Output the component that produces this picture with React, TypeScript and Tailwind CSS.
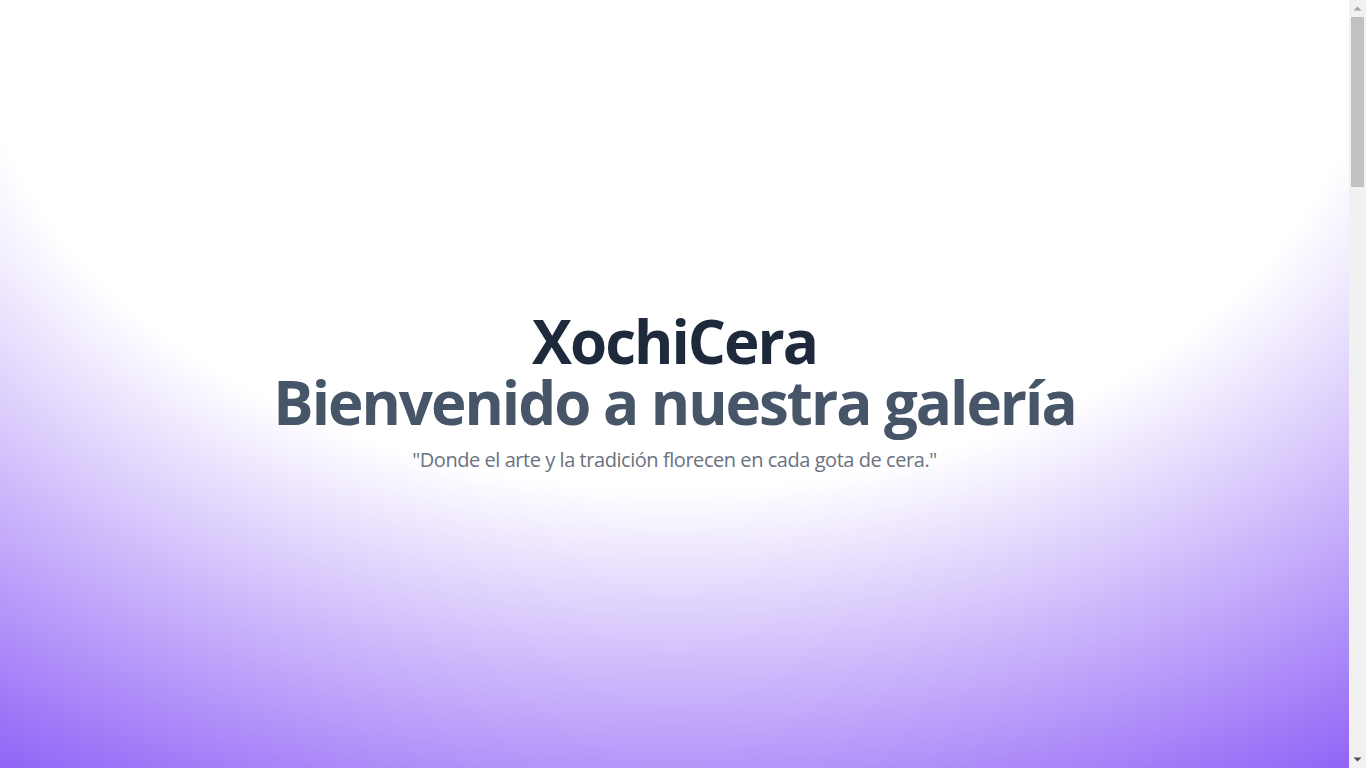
import React from "react";

function Scrollbar() {
  return (
    <div className="h-screen w-[17px] shrink-0 flex flex-col bg-[#f1f1f1]">
      <div className="h-[17px] flex items-center justify-center">
        <svg width="9" height="5" viewBox="0 0 9 5">
          <polygon points="0.5,4.5 4.5,0.5 8.5,4.5" fill="#a3a3a3" />
        </svg>
      </div>
      <div className="px-[2px]">
        <div className="h-[170px] bg-[#c1c1c1]" />
      </div>
      <div className="flex-1" />
      <div className="h-[17px] flex items-center justify-center">
        <svg width="9" height="5" viewBox="0 0 9 5">
          <polygon points="0.5,0.5 8.5,0.5 4.5,4.5" fill="#505050" />
        </svg>
      </div>
    </div>
  );
}

export default function App() {
  return (
    <div
      className="h-screen w-full flex overflow-hidden"
      style={{ fontFamily: '"Segoe UI", "Open Sans", "Noto Sans", sans-serif' }}
    >
      <main className="flex-1 h-full overflow-hidden">
        <section className="h-full w-full flex flex-col items-center justify-center text-center bg-[radial-gradient(ellipse_1320px_922px_at_50%_0%,#ffffff_53%,#8b5cf6_100%)]">
          <div className="flex flex-col items-center pt-[17px]">
            <h1 className="text-[60px] leading-[61px] font-bold tracking-[-2px]">
              <span className="block text-[#1e293b]">XochiCera</span>
              <span className="block text-[#475569]">Bienvenido a nuestra galería</span>
            </h1>
            <p className="mt-[13px] text-[20px] leading-[28px] tracking-[-0.45px] text-[#6b7280]">
              "Donde el arte y la tradición florecen en cada gota de cera."
            </p>
          </div>
        </section>
        <section className="h-[2540px] w-full bg-[#8b5cf6]" />
      </main>
      <Scrollbar />
    </div>
  );
}
